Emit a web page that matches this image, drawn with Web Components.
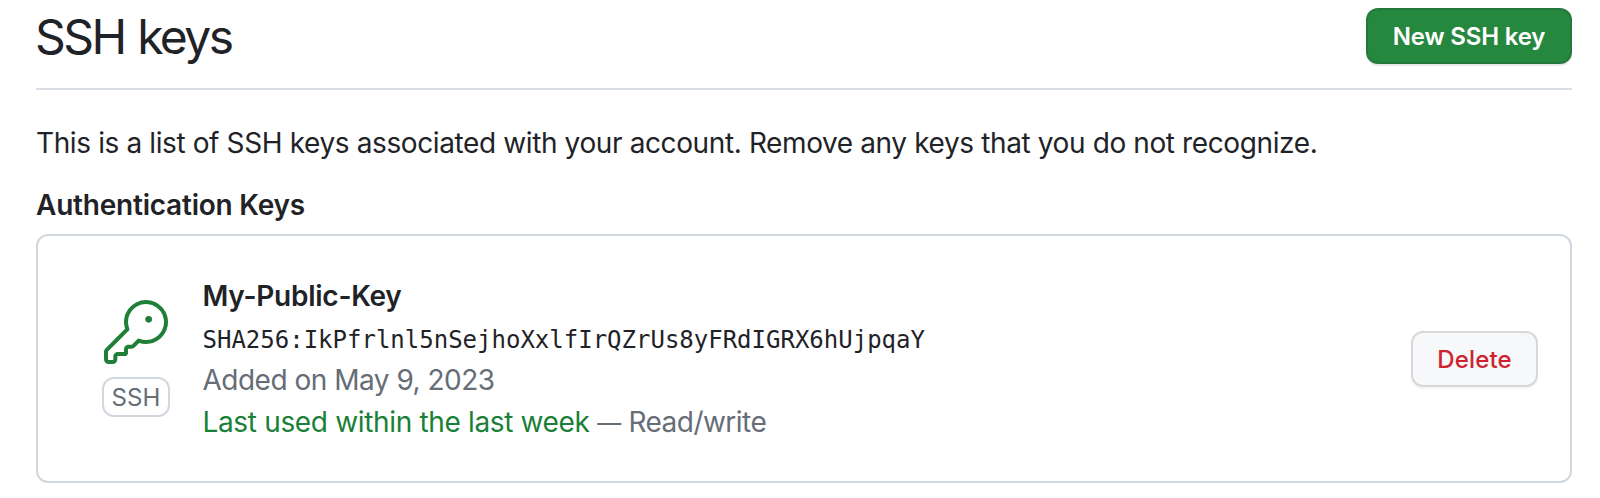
<!DOCTYPE html>
<html lang="en">
<head>
<meta charset="utf-8">
<title>SSH keys</title>
<style>
html, body { margin: 0; background: #fff; }
body { font-family: Inter, "Liberation Sans", sans-serif; font-size: 28px; line-height: 42px; color: #1f2328; }
</style>
</head>
<body>
<ssh-settings>
  <page-header slot="header">SSH keys<action-button slot="action" variant="primary">New SSH key</action-button></page-header>
  <span slot="description">This is a list of SSH keys associated with your account. Remove any keys that you do not recognize.</span>
  <span slot="title">Authentication Keys</span>
  <ssh-key-row>
    <span slot="name">My-Public-Key</span>
    <span slot="fingerprint">SHA256:IkPfrlnl5nSejhoXxlfIrQZrUs8yFRdIGRX6hUjpqaY</span>
    <span slot="added">Added on May 9, 2023</span>
    <span slot="used">Last used within the last week</span>
    <span slot="access">Read/write</span>
    <action-button slot="action" variant="danger">Delete</action-button>
  </ssh-key-row>
</ssh-settings>
<script>
function define(name, html) {
  const template = document.createElement('template');
  template.innerHTML = html;
  customElements.define(name, class extends HTMLElement {
    constructor() {
      super();
      this.attachShadow({ mode: 'open' }).append(template.content.cloneNode(true));
    }
  });
}

define('ssh-settings', `
  <style>
    :host { display: block; padding: 0 28px 15px 36px; }
    p { margin: 32px 0 20px; letter-spacing: -0.384px; white-space: nowrap; }
    h3 { margin: 0 0 8px; font-size: 28px; font-weight: 600; letter-spacing: -0.22px; }
  </style>
  <slot name="header"></slot>
  <p><slot name="description"></slot></p>
  <h3><slot name="title"></slot></h3>
  <slot></slot>`);

define('page-header', `
  <style>
    :host { display: flex; justify-content: space-between; align-items: flex-start;
      box-sizing: border-box; height: 90px; padding-top: 8px; border-bottom: 2px solid #d8dee4; }
    h2 { margin: 0 0 0 -1px; font-size: 48px; line-height: 57px; font-weight: 400; letter-spacing: -2.6px; word-spacing: 1.8px; }
  </style>
  <h2><slot></slot></h2>
  <slot name="action"></slot>`);

define('action-button', `
  <style>
    :host { display: block; flex: none; }
    button { display: block; box-sizing: border-box; width: 127px; height: 56px; padding: 0;
      border: 2px solid rgba(31,35,40,.15); border-radius: 12px;
      font: 500 24px/52px Inter, "Liberation Sans", sans-serif; letter-spacing: .14px;
      color: #cf222e; background: #f6f8fa; box-shadow: 0 2px 0 rgba(31,35,40,.04); }
    :host([variant="primary"]) button { width: 206px; font-weight: 600; letter-spacing: -.17px;
      color: #fff; background: #26883f; box-shadow: 0 2px 0 rgba(31,35,40,.1); }
    span { display: block; height: 52px; line-height: 53px; }
  </style>
  <button type="button"><span><slot></slot></span></button>`);

define('key-icon', `
  <style>
    :host { display: block; width: 64px; height: 64px; color: #1f7f37; }
    svg { display: block; fill: currentColor; }
  </style>
  <svg width="64" height="64" viewBox="0 0 24 24" aria-hidden="true">
    <circle cx="16.75" cy="7.25" r="1.25"/>
    <path d="M15.75 0a8.25 8.25 0 1 1-2.541 16.101l-1.636 1.636a1.744 1.744 0 0 1-1.237.513H9.25a.25.25 0 0 0-.25.25v1.448a.876.876 0 0 1-.256.619l-.214.213a.75.75 0 0 1-.545.22H5.25a.25.25 0 0 0-.25.25v1A1.75 1.75 0 0 1 3.25 24h-1.5A1.75 1.75 0 0 1 0 22.25v-2.836c0-.464.185-.908.513-1.236l7.386-7.388A8.249 8.249 0 0 1 15.75 0ZM9 8.25a6.733 6.733 0 0 0 .463 2.462.75.75 0 0 1-.168.804l-7.722 7.721a.25.25 0 0 0-.073.177v2.836c0 .138.112.25.25.25h1.5a.25.25 0 0 0 .25-.25v-1c0-.966.784-1.75 1.75-1.75H7.5v-1c0-.966.784-1.75 1.75-1.75h1.086a.25.25 0 0 0 .177-.073l1.971-1.972a.75.75 0 0 1 .804-.168A6.75 6.75 0 1 0 9 8.25Z"/>
  </svg>`);

define('ssh-key-row', `
  <style>
    :host { display: flex; box-sizing: border-box; height: 249px; padding: 39px 32px 0 64px;
      border: 2px solid #d0d7de; border-radius: 12px; }
    .type { display: flex; flex-direction: column; align-items: center; gap: 13px; width: 68px; padding-top: 25px; margin-right: 32px; }
    .label { box-sizing: border-box; width: 68px; height: 40px; border: 2px solid #d0d7de; border-radius: 12px;
      font-size: 24px; line-height: 37px; text-align: center; letter-spacing: .2px; color: #656d76; }
    .details { flex: 1; white-space: nowrap; padding-left: .5px; margin-right: -.5px; }
    .details > div { height: 42px; }
    .name { font-weight: 600; letter-spacing: -.24px; }
    .fingerprint { font: 24px/46px "DejaVu Sans Mono", monospace; }
    .added { color: #656d76; letter-spacing: -.5px; }
    .access { color: #656d76; letter-spacing: -.53px; }
    .used { color: #1a7f37; letter-spacing: -.34px; }
    .dash { font-size: 24px; line-height: 1; vertical-align: 1px; margin: 0 .3px; }
    .action { padding-top: 56px; }
  </style>
  <div class="type"><key-icon></key-icon><div class="label">SSH</div></div>
  <div class="details">
    <div class="name"><slot name="name"></slot></div>
    <div class="fingerprint"><slot name="fingerprint"></slot></div>
    <div class="added"><slot name="added"></slot></div>
    <div class="access"><span class="used"><slot name="used"></slot></span> <span class="dash">—</span> <slot name="access"></slot></div>
  </div>
  <div class="action"><slot name="action"></slot></div>`);
</script>
</body>
</html>
